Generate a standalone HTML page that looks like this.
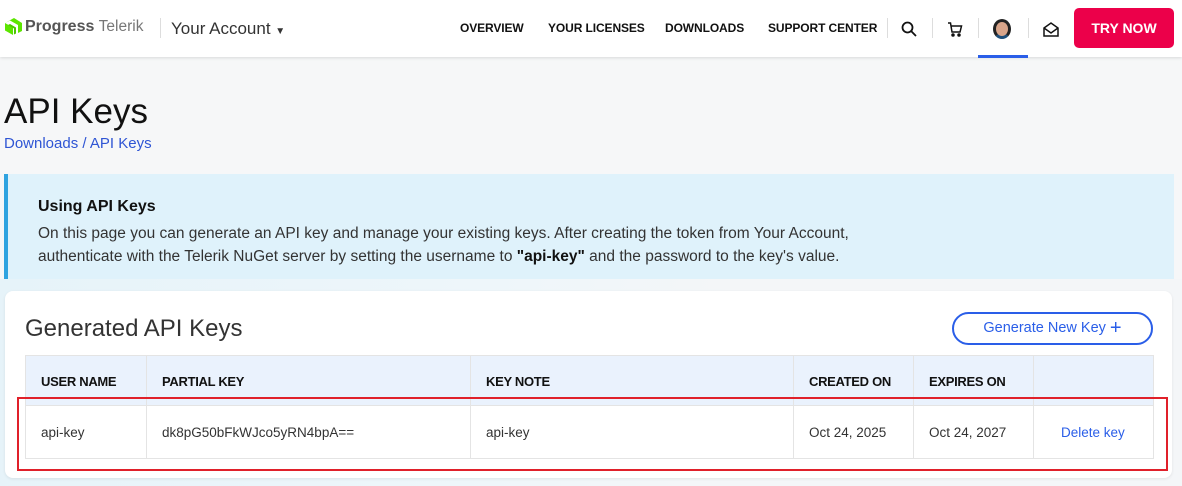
<!DOCTYPE html>
<html><head><style>
*{margin:0;padding:0;box-sizing:border-box}
body{width:1182px;height:486px;overflow:hidden;background:#f6f7f8;font-family:"Liberation Sans",sans-serif;position:relative;color:#222}
.hdr{position:absolute;left:0;top:0;width:1182px;height:57px;background:#fff;box-shadow:0 1px 3px rgba(0,0,0,.12)}
.a{position:absolute}
.nav{font-size:12px;font-weight:bold;color:#111;top:21px;letter-spacing:-0.1px}
.sep{position:absolute;top:18px;width:1px;height:20px;background:#ddd}
.bg2{position:absolute;left:0;top:279px;width:1182px;height:207px;background:linear-gradient(100deg,#e6f3f9 0%,#eef6fa 40%,#f4f6f8 60%)}
.info{position:absolute;left:4px;top:174px;width:1170px;height:105px;background:#dff2fb;border-left:4px solid #2fa3e0}
.card{position:absolute;left:5px;top:291px;width:1167px;height:187px;background:#fff;border-radius:8px;box-shadow:0 1px 3px rgba(0,0,0,.08)}
table{position:absolute;left:25px;top:355px;border-collapse:collapse;font-size:13.5px}
td,th{border:1px solid #e4e4e4;text-align:left;padding:0 0 0 15px;font-weight:normal}
th{height:50px;background:#eaf2fd;font-size:13px;color:#111;padding-top:2px;font-weight:bold;letter-spacing:-0.3px}
td{height:53px;color:#333}
</style></head><body>
<div class="hdr">
 <svg class="a" style="left:5px;top:18px" width="17" height="17" viewBox="0 0 17 17"><path d="M0 5 L9 0 L17 5 V13 L13 15 V7 L5 2.5Z" fill="#5ce500"/><path d="M0 5 L8 9.5 V17 L0 12.5Z" fill="#5ce500"/><path d="M5 6 L11 9.5 V15.5 L9 16.5 V10.5 L3 7Z" fill="#4cc700"/></svg>
 <div class="a" style="left:25px;top:18px;font-size:16px;font-weight:bold;color:#555">Progress<span style="font-weight:normal;color:#777;font-size:15.5px">&nbsp;Telerik</span></div>
 <div class="sep" style="left:160px"></div>
 <div class="a" style="left:171px;top:19px;font-size:17px;color:#333">Your Account <span style="font-size:10px">▼</span></div>
 <div class="a nav" style="left:460px">OVERVIEW</div>
 <div class="a nav" style="left:548px">YOUR LICENSES</div>
 <div class="a nav" style="left:665px">DOWNLOADS</div>
 <div class="a nav" style="left:768px">SUPPORT CENTER</div>
 <div class="sep" style="left:887px"></div>
 <svg class="a" style="left:901px;top:21px" width="16" height="16" viewBox="0 0 16 16" fill="none" stroke="#111" stroke-width="1.8"><circle cx="6.5" cy="6.5" r="5"/><path d="M10.3 10.3L15 15"/></svg>
 <div class="sep" style="left:932px"></div>
 <svg class="a" style="left:947px;top:21px" width="16" height="16" viewBox="0 0 16 16" fill="none" stroke="#111" stroke-width="1.5"><path d="M1 2H3.5L5 11H13L14.5 5H4.5"/><circle cx="6" cy="14" r="1" fill="#111"/><circle cx="12" cy="14" r="1" fill="#111"/></svg>
 <div class="sep" style="left:978px"></div>
 <div class="a" style="left:993px;top:19px;width:18px;height:20px;border-radius:50%;background:#d9a58a;border:3px solid #222;border-bottom-color:#1d4e7a"></div>
 <div class="a" style="left:978px;top:55px;width:50px;height:3px;background:#2a5ee8"></div>
 <div class="sep" style="left:1028px"></div>
 <svg class="a" style="left:1043px;top:22px" width="16" height="15" viewBox="0 0 16 15" fill="none" stroke="#111" stroke-width="1.5"><path d="M1 6L8 1L15 6V14H1Z"/><path d="M1 6L8 11L15 6"/></svg>
 <div class="a" style="left:1074px;top:8px;width:100px;height:40px;background:#ec004a;border-radius:5px;color:#fff;font-weight:bold;font-size:14px;text-align:center;line-height:40px">TRY NOW</div>
</div>
<div class="a" style="left:4px;top:92px;font-size:35px;color:#111">API Keys</div>
<div class="a" style="left:4px;top:135px;font-size:15px;color:#2f55d4">Downloads / API Keys</div>
<div class="bg2"></div>
<div class="info">
 <div class="a" style="left:30px;top:24px;font-size:16px;font-weight:bold;color:#111">Using API Keys</div>
 <div class="a" style="left:30px;top:48px;font-size:15.5px;line-height:23px;color:#333;width:1100px">On this page you can generate an API key and manage your existing keys. After creating the token from Your Account,<br>authenticate with the Telerik NuGet server by setting the username to <b style="color:#111">"api-key"</b> and the password to the key's value.</div>
</div>
<div class="card"></div>
<div class="a" style="left:25px;top:315px;font-size:24px;color:#333">Generated API Keys</div>
<div class="a" style="left:952px;top:312px;width:201px;height:33px;border:2px solid #2a5ee8;border-radius:17px;color:#2a5ee8;font-size:14.5px;line-height:29px;text-align:center">Generate New Key <span style="font-size:20px;vertical-align:-2px">+</span></div>
<table>
<tr><th style="width:121px">USER NAME</th><th style="width:324px">PARTIAL KEY</th><th style="width:323px">KEY NOTE</th><th style="width:120px">CREATED ON</th><th style="width:120px">EXPIRES ON</th><th style="width:120px"></th></tr>
<tr><td>api-key</td><td>dk8pG50bFkWJco5yRN4bpA==</td><td>api-key</td><td>Oct 24, 2025</td><td>Oct 24, 2027</td><td style="color:#2a5ee8;padding-left:27px">Delete key</td></tr>
</table>
<div class="a" style="left:17px;top:397px;width:1151px;height:74px;border:2px solid #e0202a"></div>
</body></html>
